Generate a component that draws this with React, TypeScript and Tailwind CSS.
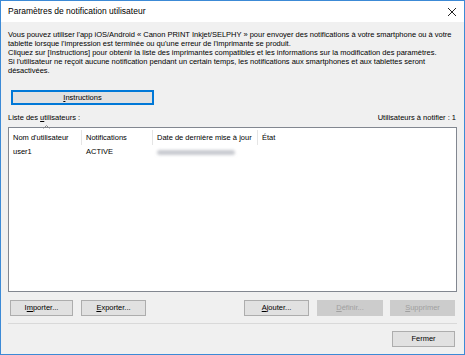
import React from "react";

function Btn({
  children,
  disabled,
  className = "",
}: {
  children: React.ReactNode;
  disabled?: boolean;
  className?: string;
}) {
  return (
    <button
      type="button"
      className={`h-[16px] border text-[7.5px] leading-none ${
        disabled
          ? "border-[#cccccc] bg-[#cccccc] text-[#a0a0a0]"
          : "border-[#adadad] bg-[#e1e1e1] text-black"
      } ${className}`}
    >
      {children}
    </button>
  );
}

export default function App() {
  return (
    <div
      className="flex h-[355px] w-[465px] flex-col border border-[#3c8ad6] bg-[#f0f0f0] text-black"
      style={{ fontFamily: '"Liberation Sans", Arial, sans-serif' }}
    >
      {/* title bar */}
      <div className="flex h-[21px] shrink-0 items-center justify-between bg-white pl-[7px] pr-[6px]">
        <span className="text-[8.5px]">Paramètres de notification utilisateur</span>
        <svg width="10" height="10" viewBox="0 0 10 10" className="mr-[1px]">
          <path d="M1 1 L9 9 M9 1 L1 9" stroke="#222" strokeWidth="1" />
        </svg>
      </div>

      <div className="flex flex-1 flex-col px-[7px] pt-[8px]">
        <p className="whitespace-nowrap text-[7.5px] leading-[9px]">
          Vous pouvez utiliser l'app iOS/Android « Canon PRINT Inkjet/SELPHY » pour envoyer des
          notifications à votre smartphone ou à votre
          <br />
          tablette lorsque l'impression est terminée ou qu'une erreur de l'imprimante se produit.
          <br />
          Cliquez sur [Instructions] pour obtenir la liste des imprimantes compatibles et les
          informations sur la modification des paramètres.
          <br />
          Si l'utilisateur ne reçoit aucune notification pendant un certain temps, les
          notifications aux smartphones et aux tablettes seront
          <br />
          désactivées.
        </p>

        <div className="mt-[15px] flex pl-[3px]">
          <button
            type="button"
            className="h-[15px] w-[143px] border-2 border-[#0078d7] bg-[#e1e1e1] text-[7.5px] leading-none"
          >
            <span className="underline">I</span>nstructions
          </button>
        </div>

        <div className="mt-[8px] flex items-end justify-between text-[7.5px] leading-[9px]">
          <span>
            Liste des <span className="underline">u</span>tilisateurs :
          </span>
          <span className="pr-[1px]">Utilisateurs à notifier : 1</span>
        </div>

        <div className="relative mt-[5px] h-[165px] border border-[#828790] bg-white text-[7.5px]">
          <div className="flex h-[17px] items-center pt-[2px]">
            <div className="relative w-[72px] pl-[4px]">
              Nom d'utilisateur
              <svg
                width="7"
                height="4"
                viewBox="0 0 7 4"
                className="absolute left-[34px] top-[-7px]"
              >
                <path d="M0.5 3.5 L3.5 0.5 L6.5 3.5" stroke="#888" fill="none" />
              </svg>
            </div>
            <div className="h-full w-[71px] border-l border-[#e5e5e5] pl-[4px] leading-[15px]">
              Notifications
            </div>
            <div className="h-full w-[105px] border-l border-[#e5e5e5] pl-[4px] leading-[15px]">
              Date de dernière mise à jour
            </div>
            <div className="h-full flex-1 border-l border-[#e5e5e5] pl-[4px] leading-[15px]">
              État
            </div>
          </div>
          <div className="flex h-[14px] items-center">
            <div className="w-[72px] pl-[4px]">user1</div>
            <div className="w-[71px] pl-[5px]">ACTIVE</div>
            <div className="w-[105px] pl-[5px]">
              <div className="h-[5px] w-[78px] rounded-full bg-[#c8cad0] blur-[1.5px]" />
            </div>
          </div>
        </div>

        <div className="mt-[8px] flex items-center px-[2px]">
          <Btn className="w-[63px]">
            I<span className="underline">m</span>porter...
          </Btn>
          <Btn className="ml-[8px] w-[65px]">
            <span className="underline">E</span>xporter...
          </Btn>
          <Btn className="ml-auto w-[65px]">
            <span className="underline">A</span>jouter...
          </Btn>
          <Btn disabled className="ml-[8px] w-[66px]">
            <span className="underline">D</span>éfinir...
          </Btn>
          <Btn disabled className="ml-[7px] w-[65px]">
            <span className="underline">S</span>upprimer
          </Btn>
        </div>

        <div className="mt-[7px] border-t border-[#d9d9d9]" />

        <div className="mt-[7px] flex justify-end px-[2px]">
          <Btn className="w-[63px]">Fermer</Btn>
        </div>
      </div>
    </div>
  );
}
